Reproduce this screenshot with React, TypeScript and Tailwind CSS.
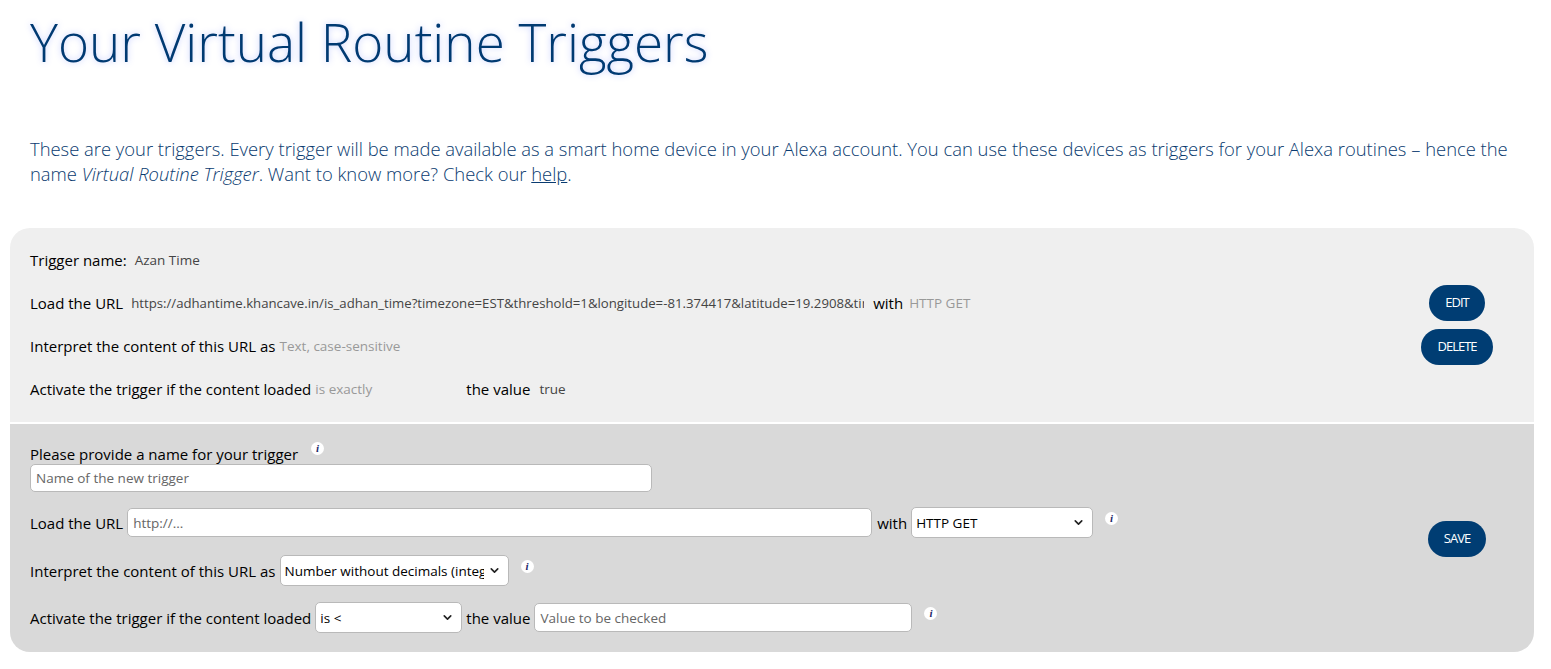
import { ChevronDown } from 'lucide-react'

const url =
  'https://adhantime.khancave.in/is_adhan_time?timezone=EST&threshold=1&longitude=-81.374417&latitude=19.2908&timestamp=now'

function Info({ className = '' }: { className?: string }) {
  return (
    <span
      className={`inline-flex items-center justify-center w-[13px] h-[13px] rounded-full bg-white text-[#1f2a6b] text-[11px] font-bold italic leading-none font-['Liberation_Serif',serif] ${className}`}
    >
      i
    </span>
  )
}

function Select({ value, width }: { value: string; width: string }) {
  return (
    <div className={`relative ${width} h-[31px]`}>
      <select
        defaultValue={value}
        className="appearance-none w-full h-full bg-white border border-[#b9b9b9] rounded-[5px] pl-[4px] pr-6 text-[13.5px] text-black"
      >
        <option>{value}</option>
      </select>
      <ChevronDown size={13} strokeWidth={3} className="absolute right-[8px] top-[9px] text-[#222] pointer-events-none" />
    </div>
  )
}

function Button({ children }: { children: string }) {
  return (
    <button className="h-9 px-4 rounded-full bg-[#003d73] text-white text-[13px] tracking-[-1px] uppercase">
      {children}
    </button>
  )
}

export default function App() {
  return (
    <div className="min-h-screen bg-white font-['Open_Sans',sans-serif] pb-4">
      <h1 className="px-[30px] pt-[4px] text-[53px] leading-[76px] font-light text-[#003a72] [text-shadow:0_0_6px_rgba(120,140,255,0.45)]">
        Your Virtual Routine Triggers
      </h1>

      <p className="px-[30px] mt-[56px] pr-[30px] text-[18.4px] leading-[25px] font-light text-[#0a3b70]">
        These are your triggers. Every trigger will be made available as a smart home device in your Alexa account. You can
        use these devices as triggers for your Alexa routines – hence the name <i>Virtual Routine Trigger</i>. Want to know
        more? Check our <a className="underline">help</a>.
      </p>

      <div className="mx-[10px] mt-[42px] w-[1524px] rounded-[20px] overflow-hidden">
        {/* existing trigger */}
        <div className="flex bg-[#efefef] pl-[20px] pt-[22px] pb-[23px]">
          <div className="flex-1 flex flex-col gap-[23px] text-[15px] leading-[20px] text-black">
            <div className="flex items-center">
              <span>Trigger name:</span>
              <span className="pl-[8px] text-[13.5px] text-[#444]">Azan Time</span>
            </div>
            <div className="flex items-center">
              <span>Load the URL</span>
              <span className="ml-1 w-[745px] pl-[4px] pr-[8px] text-[13.2px] text-[#444]">
                <span className="block whitespace-nowrap overflow-hidden">{url}</span>
              </span>
              <span className="ml-[1px]">with</span>
              <span className="pl-[6px] text-[13.5px] text-[#999]">HTTP GET</span>
            </div>
            <div className="flex items-center">
              <span>Interpret the content of this URL as</span>
              <span className="pl-[4px] text-[13.5px] text-[#999]">Text, case-sensitive</span>
            </div>
            <div className="flex items-center">
              <span>Activate the trigger if the content loaded</span>
              <span className="ml-1 w-[147px] text-[13.5px] text-[#999]">is exactly</span>
              <span className="ml-1">the value</span>
              <span className="pl-[9px] text-[13.5px] text-[#444]">true</span>
            </div>
          </div>
          <div className="w-[154px] flex flex-col items-center justify-center gap-2">
            <Button>Edit</Button>
            <Button>Delete</Button>
          </div>
        </div>

        <div className="h-[2px] bg-white" />

        {/* new trigger form */}
        <div className="flex bg-[#d9d9d9] pl-[20px] pt-[20px] pb-[19px]">
          <div className="flex-1 flex flex-col text-[15px] leading-[20px] text-black">
            <div className="flex items-start">
              <span>Please provide a name for your trigger</span>
              <Info className="ml-[13px] mt-[-2px]" />
            </div>
            <input
              placeholder="Name of the new trigger"
              className="w-[622px] h-[28px] bg-white border border-[#b9b9b9] rounded-[5px] px-[5px] text-[13.5px] placeholder:text-[#666]"
            />

            <div className="flex items-center gap-1 mt-[15px]">
              <span>Load the URL</span>
              <input
                placeholder="http://..."
                className="w-[745px] h-[29px] bg-white border border-[#b9b9b9] rounded-[5px] px-[5px] text-[13.5px] placeholder:text-[#666]"
              />
              <span className="ml-[1px]">with</span>
              <Select value="HTTP GET" width="w-[182px]" />
              <Info className="ml-[8px] mb-[8px]" />
            </div>

            <div className="flex items-center gap-1 mt-[17px]">
              <span>Interpret the content of this URL as</span>
              <Select value="Number without decimals (integer)" width="w-[229px]" />
              <Info className="ml-[8px] mb-[8px]" />
            </div>

            <div className="flex items-center gap-1 mt-[16px]">
              <span>Activate the trigger if the content loaded</span>
              <Select value="is <" width="w-[147px]" />
              <span>the value</span>
              <input
                placeholder="Value to be checked"
                className="w-[378px] h-[29px] bg-white border border-[#b9b9b9] rounded-[5px] px-[5px] text-[13.5px] placeholder:text-[#666]"
              />
              <Info className="ml-[8px] mb-[8px]" />
            </div>
          </div>
          <div className="w-[154px] flex flex-col items-center justify-center">
            <Button>Save</Button>
          </div>
        </div>
      </div>
    </div>
  )
}
